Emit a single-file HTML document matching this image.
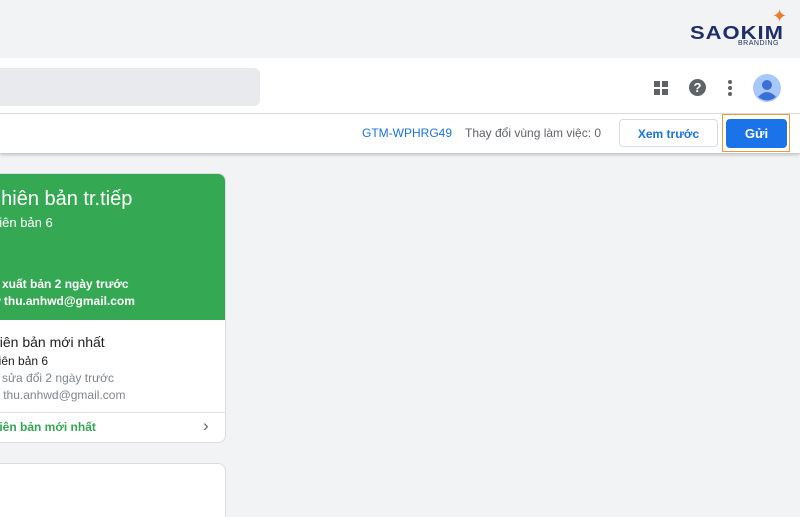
<!DOCTYPE html><html><head><style>
html,body{margin:0;width:800px;height:517px;overflow:hidden}
body{background:#f1f3f4;font-family:"Liberation Sans",Arial,sans-serif;position:relative}
.a{position:absolute;white-space:nowrap}
</style></head><body>
<div class="a" style="left:0;top:0;width:800px;height:58px;background:#f1f3f4"></div>
<div class="a" style="left:690px;top:20px;font-size:22px;font-weight:bold;color:#1f2d6b;letter-spacing:1px;transform:scaleY(.85)">SAOKIM</div>
<div class="a" style="left:738px;top:40px;font-size:7px;color:#1f2d6b;letter-spacing:.5px">BRANDING</div>
<div class="a" style="left:772px;top:6px;color:#f07a2a;font-size:18px">✦</div>
<div class="a" style="left:0;top:58px;width:800px;height:55px;background:#fff;border-bottom:1px solid #dadce0"></div>
<div class="a" style="left:-10px;top:68px;width:270px;height:38px;background:#e8eaed;border-radius:6px"></div>
<svg class="a" style="left:654px;top:81px" width="14" height="14"><rect x="0" y="0" width="6" height="6" fill="#5f6368"/><rect x="8" y="0" width="6" height="6" fill="#5f6368"/><rect x="0" y="8" width="6" height="6" fill="#5f6368"/><rect x="8" y="8" width="6" height="6" fill="#5f6368"/></svg>
<div class="a" style="left:689px;top:79px;width:17px;height:17px;border-radius:50%;background:#5f6368;color:#fff;font-size:13px;font-weight:bold;text-align:center;line-height:17px">?</div>
<svg class="a" style="left:728px;top:79px" width="4" height="18"><circle cx="2" cy="3" r="2" fill="#5f6368"/><circle cx="2" cy="9" r="2" fill="#5f6368"/><circle cx="2" cy="15" r="2" fill="#5f6368"/></svg>
<svg class="a" style="left:753px;top:74px" width="28" height="28"><circle cx="14" cy="14" r="14" fill="#a8c7fa"/><circle cx="14" cy="11" r="5" fill="#3b6fd8"/><path d="M5 23 Q14 13 23 23 Q14 30 5 23Z" fill="#3b6fd8"/></svg>
<div class="a" style="left:0;top:114px;width:800px;height:39px;background:#fff;box-shadow:0 2px 3px rgba(0,0,0,.2)"></div>
<div class="a" style="left:362px;top:126px;font-size:12px;color:#1a73e8">GTM-WPHRG49</div>
<div class="a" style="left:465px;top:126px;font-size:12px;color:#5f6368">Thay đổi vùng làm việc: 0</div>
<div class="a" style="left:619px;top:119px;width:99px;height:28px;border:1px solid #dadce0;border-radius:4px;box-sizing:border-box;font-size:12px;color:#1a73e8;font-weight:bold;text-align:center;line-height:28px">Xem trước</div>
<div class="a" style="left:722px;top:114px;width:68px;height:38px;border:1px solid #f29a3b;box-sizing:border-box"></div>
<div class="a" style="left:726px;top:119px;width:61px;height:29px;background:#1a73e8;border-radius:4px;color:#fff;font-size:13px;font-weight:bold;text-align:center;line-height:29px">Gửi</div>
<div class="a" style="left:-10px;top:173px;width:236px;height:270px;background:#fff;border-radius:8px;border:1px solid #dadce0;overflow:hidden;box-sizing:border-box">
<div style="height:146px;background:#34a853;color:#fff;position:relative">
<div class="a" style="left:-1px;top:14px;font-size:20px">nhiên bản tr.tiếp</div>
<div class="a" style="left:1px;top:41px;font-size:13px">hiên bản 6</div>
<div class="a" style="left:1px;top:103px;font-size:12px;font-weight:bold">ã xuất bản 2 ngày trước</div>
<div class="a" style="left:1px;top:120px;font-size:12px;font-weight:bold">ở thu.anhwd@gmail.com</div>
</div>
<div style="position:relative;height:92px;border-bottom:1px solid #e0e0e0">
<div class="a" style="left:1px;top:14px;font-size:14px;color:#202124">hiên bản mới nhất</div>
<div class="a" style="left:1px;top:34px;font-size:12px;color:#202124">hiên bản 6</div>
<div class="a" style="left:1px;top:51px;font-size:12px;color:#80868b">ã sửa đổi 2 ngày trước</div>
<div class="a" style="left:1px;top:68px;font-size:12px;color:#80868b">ở thu.anhwd@gmail.com</div>
</div>
<div class="a" style="left:1px;top:246px;font-size:12px;color:#34a853;font-weight:bold">hiên bản mới nhất</div>
<div class="a" style="left:212px;top:242px;font-size:17px;color:#5f6368">›</div>
</div>
<div class="a" style="left:-10px;top:463px;width:236px;height:70px;background:#fff;border-radius:8px;border:1px solid #dadce0;box-sizing:border-box"></div>
</body></html>
